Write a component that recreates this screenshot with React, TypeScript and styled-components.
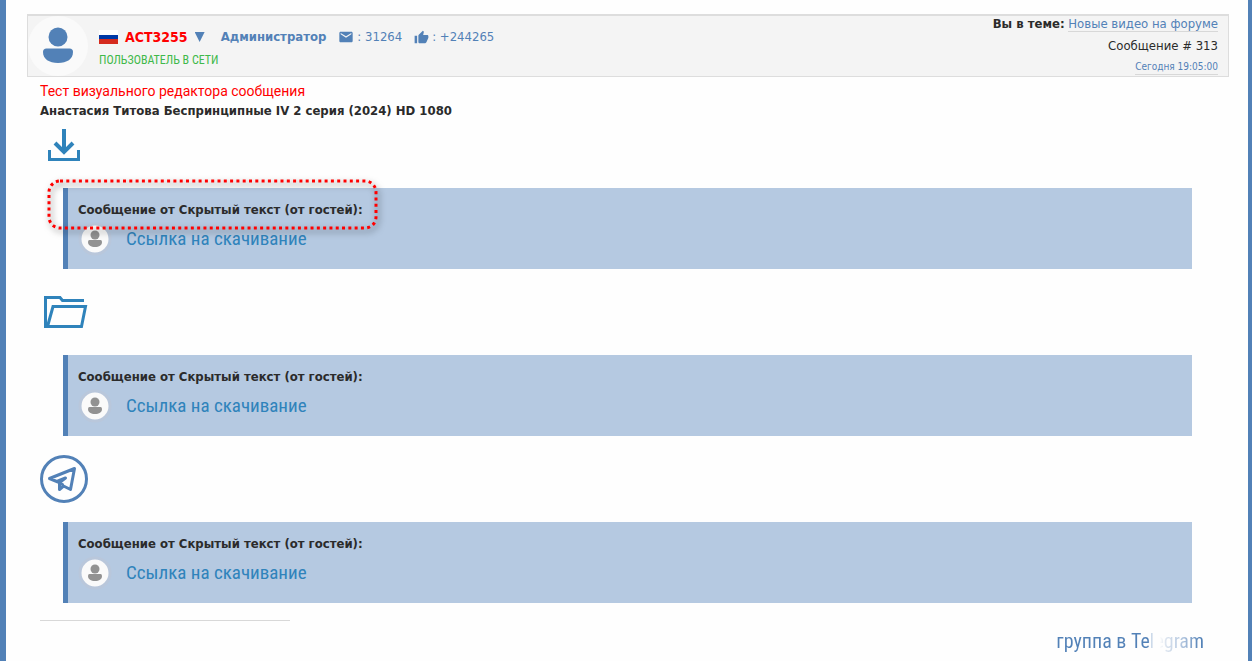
import React from 'react';
import styled, { createGlobalStyle } from 'styled-components';
import { MdEmail, MdThumbUp } from 'react-icons/md';

const blue = '#5281b7';
const linkBlue = '#2f83bb';
const narrow = "'Roboto Condensed', 'Open Sans Condensed', sans-serif";

const GlobalStyle = createGlobalStyle`
  * { box-sizing: border-box; }
  body {
    margin: 0;
    background: #fefefe;
    color: #2b2b2b;
    font: 13px/20px 'DejaVu Sans Condensed', 'DejaVu Sans', sans-serif;
  }
  svg { display: block; flex: none; }
`;

const Page = styled.main`
  min-height: 100vh;
  padding: 14px 19px 6px 21px;
  border-left: 6px solid ${blue};
  border-right: 4px solid ${blue};
`;

const PostHeader = styled.header`
  display: flex;
  align-items: flex-start;
  border: 1px solid #dddddd;
  border-top-width: 2px;
  background: #f4f4f4;
`;

const UserPanel = styled.div`
  flex: 1;
  padding: 11px 0 0 11px;
`;

const UserRow = styled.div`
  display: flex;
  align-items: center;
  color: ${blue};
`;

const Flag = styled.span`
  width: 19px;
  height: 14px;
  margin-right: 7px;
  background: linear-gradient(#fff 0 5px, #0039a6 5px 9px, #d52b1e 9px);
`;

const UserName = styled.a`
  color: #ff0000;
  font-size: 14px;
  font-weight: bold;
  text-decoration: none;
`;

const MenuButton = styled.button`
  width: 10px;
  height: 10px;
  margin: 0 16px 0 7px;
  padding: 0;
  border: 0;
  background: ${blue};
  clip-path: polygon(0 0, 100% 0, 50% 100%);
`;

const Role = styled.strong`
  margin-right: 12px;
`;

const Stat = styled.span`
  display: flex;
  align-items: center;
  gap: 3px;
  margin-right: 12px;
`;

const Status = styled.div`
  margin-top: 2px;
  color: #3fb94a;
  font: 12px/22px ${narrow};
`;

const TopicInfo = styled.div`
  display: flex;
  flex-direction: column;
  align-items: flex-end;
  gap: 7px;
  padding-right: 10px;
  line-height: 15px;
`;

const DottedLink = styled.a<{ $small?: boolean }>`
  border-bottom: 1px solid #d8d8d8;
  color: ${blue};
  font-size: ${(p) => (p.$small ? '10px' : '13px')};
  line-height: ${(p) => (p.$small ? '14px' : '15px')};
  text-decoration: none;
`;

const Body = styled.section`
  padding: 4px 37px 0 13px;
`;

const Line = styled.p<{ $red?: boolean }>`
  margin: 0;
  color: ${(p) => (p.$red ? '#ff0000' : 'inherit')};
  font-family: ${(p) => (p.$red ? 'Roboto, sans-serif' : 'inherit')};
  font-size: ${(p) => (p.$red ? '14px' : '13px')};
  font-weight: ${(p) => (p.$red ? 'normal' : 'bold')};
`;

const Quote = styled.blockquote`
  position: relative;
  margin: 19px 0 19px 23px;
  padding: 12px 10px;
  border-left: 5px solid ${blue};
  background: #b5c9e1;

  &:last-of-type {
    margin-bottom: 17px;
  }
`;

const QuoteTitle = styled.div`
  margin-bottom: 2px;
  font-weight: bold;
`;

const QuoteRow = styled.div`
  display: flex;
  align-items: center;
  gap: 14px;
  padding-bottom: 1px;
`;

const DownloadLink = styled.a`
  color: ${linkBlue};
  font: 19px/34px ${narrow};
  text-decoration: none;
`;

const Highlight = styled.svg`
  position: absolute;
  left: -21px;
  top: -9px;
  overflow: visible;
  pointer-events: none;
  filter: drop-shadow(2px 3px 3px rgba(0, 0, 0, 0.6));
`;

const Rule = styled.hr`
  width: 250px;
  margin: 0;
  border: 0;
  border-top: 1px solid #d8d8d8;
`;

const PageFooter = styled.footer`
  display: flex;
  justify-content: flex-end;
  margin-top: 8px;
  padding-right: 25px;
`;

const GroupLink = styled.a`
  background: linear-gradient(90deg, ${blue} 62%, transparent 66% 70%, #dde5ef 74%, #a9bfdb 87%, ${blue} 97%);
  background-clip: text;
  color: transparent;
  font: 20px/24px ${narrow};
  text-decoration: none;
`;

const Avatar = () => (
  <svg width="60" height="60" viewBox="0 0 60 60">
    <circle cx="30" cy="30" r="30" fill="#fafafa" />
    <circle cx="30" cy="21" r="9.500" fill={blue} />
    <path d="M18.500 32.500h23q3.500 0 3.500 3.500c0 7-6 11-15 11s-15-4-15-11q0-3.500 3.500-3.500z" fill={blue} />
  </svg>
);

const SmallAvatar = () => (
  <svg width="34" height="34" viewBox="0 0 34 34">
    <circle cx="17" cy="17" r="15" fill="#fafafa" stroke="#b9c7db" strokeWidth="3" />
    <circle cx="17" cy="13" r="4.5" fill="#929292" />
    <path d="M11.500 18h11q1.500 0 1.500 2c0 3.500-3 5-7 5s-7-1.500-7-5q0-2 1.500-2z" fill="#929292" />
  </svg>
);

const DownloadIcon = () => (
  <svg width="48" height="48" viewBox="0 0 48 48" fill="none" stroke={linkBlue} strokeWidth="3">
    <path d="M9.500 29v9.500h29V29" />
    <path d="M24 8v23" strokeWidth="4" />
    <path d="M15 22l9 9 9-9" strokeWidth="4" />
  </svg>
);

const FolderIcon = () => (
  <svg width="48" height="48" viewBox="0 0 48 48" fill="none" stroke={linkBlue} strokeWidth="3">
    <path d="M44 12.500H22.500L20 9.500H5.500v29h36l4-20H13L7.500 38.500" />
  </svg>
);

const TelegramIcon = () => (
  <svg width="48" height="48" viewBox="0 0 48 48" fill="none" stroke={blue} strokeLinejoin="round" strokeLinecap="round">
    <circle cx="24" cy="24" r="22.500" strokeWidth="3" />
    <path d="M18 27L9.500 23.500L34.500 13.500l-4 21-7-3.500-4 3.500v-7l6-4.500-7.500 3" strokeWidth="3" />
    <path d="M19.500 28l3 1.500" strokeWidth="3" />
  </svg>
);

const sections = [
  { id: 'download', Icon: DownloadIcon, highlighted: true },
  { id: 'folder', Icon: FolderIcon, highlighted: false },
  { id: 'telegram', Icon: TelegramIcon, highlighted: false },
];

export default function App() {
  return (
    <Page>
      <GlobalStyle />
      <PostHeader>
        <Avatar />
        <UserPanel>
          <UserRow>
            <Flag />
            <UserName href="#user">ACT3255</UserName>
            <MenuButton aria-label="ACT3255" />
            <Role>Администратор</Role>
            <Stat><MdEmail size={16} /> : 31264</Stat>
            <Stat><MdThumbUp size={15} /> : +244265</Stat>
          </UserRow>
          <Status>ПОЛЬЗОВАТЕЛЬ В СЕТИ</Status>
        </UserPanel>
        <TopicInfo>
          <div><b>Вы в теме:</b> <DottedLink href="#topic">Новые видео на форуме</DottedLink></div>
          <div>Сообщение # 313</div>
          <DottedLink href="#post" $small>Сегодня 19:05:00</DottedLink>
        </TopicInfo>
      </PostHeader>
      <Body>
        <Line $red>Тест визуального редактора сообщения</Line>
        <Line>Анастасия Титова Беспринципные IV 2 серия (2024) HD 1080</Line>
        {sections.map(({ id, Icon, highlighted }) => (
          <React.Fragment key={id}>
            <Icon />
            <Quote>
              <QuoteTitle>Сообщение от Скрытый текст (от гостей):</QuoteTitle>
              <QuoteRow>
                <SmallAvatar />
                <DownloadLink href={`#${id}`}>Ссылка на скачивание</DownloadLink>
              </QuoteRow>
              {highlighted && (
                <Highlight width="331" height="51" viewBox="0 0 331 51">
                  <rect x="2" y="2" width="327" height="47" rx="11" fill="none" stroke="#ff0000" strokeWidth="3" strokeDasharray="3 3.300" />
                </Highlight>
              )}
            </Quote>
          </React.Fragment>
        ))}
        <Rule />
      </Body>
      <PageFooter>
        <GroupLink href="#group">группа в Telegram</GroupLink>
      </PageFooter>
    </Page>
  );
}
